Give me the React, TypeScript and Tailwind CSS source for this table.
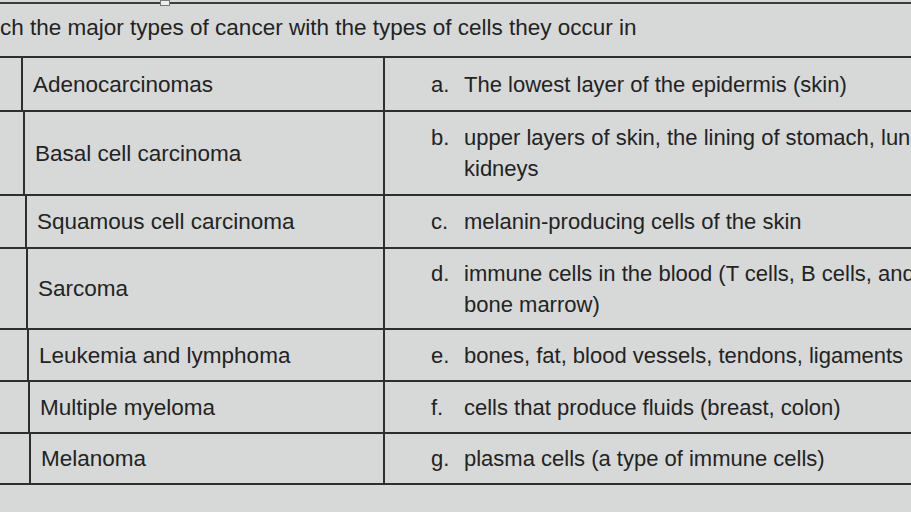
import React from 'react';

type Row = {
  cancer: string;
  letter: string;
  lines: string[];
  height: string;
  lead: string;
};

const ROWS: Row[] = [
  { cancer: 'Adenocarcinomas', letter: 'a.', lines: ['The lowest layer of the epidermis (skin)'], height: 'h-[54px]', lead: 'w-[23px]' },
  { cancer: 'Basal cell carcinoma', letter: 'b.', lines: ['upper layers of skin, the lining of stomach, lungs,', 'kidneys'], height: 'h-[84px]', lead: 'w-[25px]' },
  { cancer: 'Squamous cell carcinoma', letter: 'c.', lines: ['melanin-producing cells of the skin'], height: 'h-[53px]', lead: 'w-[27px]' },
  { cancer: 'Sarcoma', letter: 'd.', lines: ['immune cells in the blood (T cells, B cells, and', 'bone marrow)'], height: 'h-[81px]', lead: 'w-[28px]' },
  { cancer: 'Leukemia and lymphoma', letter: 'e.', lines: ['bones, fat, blood vessels, tendons, ligaments'], height: 'h-[52px]', lead: 'w-[29px]' },
  { cancer: 'Multiple myeloma', letter: 'f.', lines: ['cells that produce fluids (breast, colon)'], height: 'h-[52px]', lead: 'w-[30px]' },
  { cancer: 'Melanoma', letter: 'g.', lines: ['plasma cells (a type of immune cells)'], height: 'h-[51px]', lead: 'w-[31px]' },
];

export default function App() {
  return (
    <div className="w-[911px] h-[512px] overflow-hidden bg-[#d6d9d8] text-[#232323] text-[22px] font-['Liberation_Sans',Arial,sans-serif]">
      {/* strip of the page above */}
      <div className="relative mt-[2px] h-[2px] bg-[#3b3b3b]">
        <div className="absolute left-[160px] top-[-2px] w-[10px] h-[6px] border border-[#777] bg-[#eeeeee]" />
      </div>

      <div className="mt-[8px] text-[22.5px] leading-[31px] whitespace-nowrap">
        ch the major types of cancer with the types of cells they occur in
      </div>

      <div className="mt-[13px] border-t-2 border-[#2e2e2e]">
        {ROWS.map((row) => (
          <div key={row.letter} className={`flex border-b-2 border-[#2e2e2e] ${row.height}`}>
            <div className="flex w-[385px] shrink-0 border-r-2 border-[#2e2e2e]">
              <div className={`${row.lead} shrink-0 border-r-2 border-[#2e2e2e]`} />
              <div className="flex items-center pl-[10px] text-[22.5px] leading-[31px] whitespace-nowrap">
                {row.cancer}
              </div>
            </div>
            <div className="flex items-center pl-[46px] leading-[31px] whitespace-nowrap">
              <div className="flex">
                <span className="w-[33px] shrink-0">{row.letter}</span>
                <div>
                  {row.lines.map((line) => (
                    <div key={line}>{line}</div>
                  ))}
                </div>
              </div>
            </div>
          </div>
        ))}
      </div>
    </div>
  );
}
